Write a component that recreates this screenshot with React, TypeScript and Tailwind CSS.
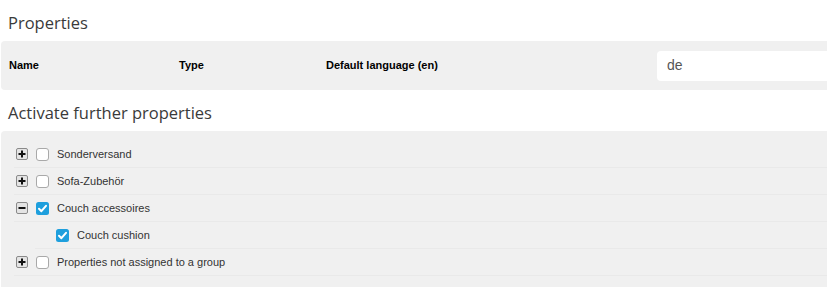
import React from "react";

type Row = {
  label: string;
  checked: boolean;
  expand?: "plus" | "minus";
  indent?: boolean;
};

const rows: Row[] = [
  { label: "Sonderversand", checked: false, expand: "plus" },
  { label: "Sofa-Zubehör", checked: false, expand: "plus" },
  { label: "Couch accessoires", checked: true, expand: "minus" },
  { label: "Couch cushion", checked: true, indent: true },
  { label: "Properties not assigned to a group", checked: false, expand: "plus" }
];

const ExpandIcon: React.FC<{ kind: "plus" | "minus" }> = ({ kind }) => (
  <svg width="12" height="12" viewBox="0 0 12 12" className="shrink-0">
    <rect x="0.5" y="0.5" width="11" height="11" rx="1.5" fill="#e4e4e4" stroke="#8a8a8a" />
    <rect x="2.5" y="5" width="7" height="2" fill="#111" />
    {kind === "plus" && <rect x="5" y="2.5" width="2" height="7" fill="#111" />}
  </svg>
);

const Checkbox: React.FC<{ checked: boolean }> = ({ checked }) =>
  checked ? (
    <svg width="13" height="13" viewBox="0 0 13 13" className="shrink-0">
      <rect x="0" y="0" width="13" height="13" rx="2.5" fill="#1e9fdd" />
      <path d="M3 6.8 L5.4 9.2 L10 3.8" fill="none" stroke="#fff" strokeWidth="2" strokeLinecap="round" strokeLinejoin="round" />
    </svg>
  ) : (
    <span className="block w-[13px] h-[13px] shrink-0 rounded-[3px] border border-[#a9a9a9] bg-white" />
  );

const App: React.FC = () => {
  return (
    <div className="w-[827px] h-[287px] overflow-hidden bg-white font-['Liberation_Sans',Arial,sans-serif] text-[#333]">
      <h2 className="pl-2 pt-[10px] h-[41px] text-[16.5px] leading-[26px] text-[#3a3a3a] font-['Open_Sans',sans-serif]">
        Properties
      </h2>
      <div className="ml-[1px] w-[840px] h-[49px] rounded-[4px] bg-[#f0f0f0] flex items-center text-[11px] font-bold text-black">
        <div className="w-[178px] pl-2">Name</div>
        <div className="w-[147px]">Type</div>
        <div className="w-[331px]">Default language (en)</div>
        <div className="flex-1 h-[30px] rounded-[4px] bg-white flex items-center pl-[10px] text-[14px] font-normal text-[#555]">
          de
        </div>
      </div>
      <h2 className="pl-2 pt-[10px] h-[41px] text-[16.5px] leading-[26px] text-[#3a3a3a] font-['Open_Sans',sans-serif]">
        Activate further properties
      </h2>
      <div className="ml-[1px] w-[840px] h-[160px] rounded-[4px] bg-[#f0f0f0] pt-[10px] pl-[13px]">
        {rows.map(row => (
          <div
            key={row.label}
            className={`h-[27px] flex items-center border-b border-[#e9e9e9] text-[11px] ${row.indent ? "ml-[21px] pl-[21px]" : ""}`}
          >
            {row.expand && (
              <span className="ml-[2px] mr-[8px] flex">
                <ExpandIcon kind={row.expand} />
              </span>
            )}
            <Checkbox checked={row.checked} />
            <span className="ml-[8px]">{row.label}</span>
          </div>
        ))}
      </div>
    </div>
  );
};

export default App;
